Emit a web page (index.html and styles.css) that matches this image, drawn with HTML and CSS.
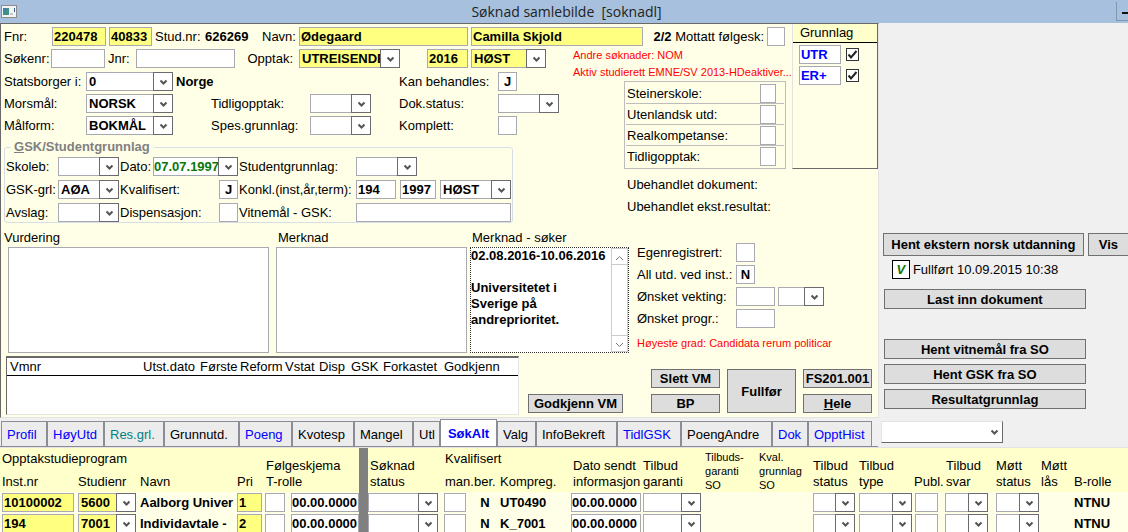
FILE: index.html
```html
<!DOCTYPE html>
<html lang="no">
<head>
<meta charset="utf-8">
<title>Søknad samlebilde</title>
<link rel="stylesheet" href="styles.css">
</head>
<body>
<div class="window">
  <header class="titlebar">
    <svg class="app-icon" width="16" height="13" viewBox="0 0 16 13" aria-hidden="true">
      <rect x=".5" y=".5" width="15" height="12" fill="#f4f4f4" stroke="#8d8d8d"/>
      <rect x="2" y="3" width="6" height="7" fill="#3f8f8a"/><rect x="2" y="3" width="3" height="3" fill="#4a79b8"/>
      <rect x="9" y="8" width="3" height="2" fill="#c3c9d6"/><rect x="13" y="3" width="1" height="4" fill="#3b5a86"/>
    </svg>
    <h1>Søknad samlebilde&nbsp; [soknadl]</h1>
    <button class="minimize" type="button" aria-label="Minimer"></button>
  </header>

  <div class="upper">
    <main class="form">
      <div class="top">
        <div class="top-main">
          <div class="row row-person">
            <label for="fnr">Fnr:</label>
            <input id="fnr" class="key" value="220478">
            <input class="key" value="40833" aria-label="Personnr">
            <span>Stud.nr:</span><b>626269</b>
            <label for="navn">Navn:</label>
            <input id="navn" class="key" value="Ødegaard">
            <input class="key" value="Camilla Skjold" aria-label="Fornavn">
            <label class="right" for="folgesk"><b>2/2</b> Mottatt følgesk:</label>
            <input id="folgesk">
          </div>
          <div class="middle">
            <div class="left">
              <div class="row row-opptak">
                <label for="sokenr">Søkenr:</label><input id="sokenr">
                <label for="jnr">Jnr:</label><input id="jnr">
                <label class="right" for="opptak">Opptak:</label>
                <span class="combo key"><select id="opptak"><option>UTREISENDE</option></select></span>
                <span></span>
                <input class="key" value="2016" aria-label="År">
                <span class="combo key"><select aria-label="Termin"><option>HØST</option></select></span>
              </div>
              <div class="details">
                <label for="stat">Statsborger i:</label>
                <span class="combo"><select id="stat"><option>0</option></select></span>
                <b class="country">Norge</b>
                <label class="c7" for="kan">Kan behandles:</label>
                <input id="kan" class="flag" value="J">

                <label for="morsmal">Morsmål:</label>
                <span class="combo"><select id="morsmal"><option>NORSK</option></select></span>
                <label class="c4" for="tidlig">Tidligopptak:</label>
                <span class="combo"><select id="tidlig"><option></option></select></span>
                <label class="c7" for="dok">Dok.status:</label>
                <span class="combo"><select id="dok"><option></option></select></span>

                <label for="malform">Målform:</label>
                <span class="combo"><select id="malform"><option>BOKMÅL</option></select></span>
                <label class="c4" for="spes">Spes.grunnlag:</label>
                <span class="combo"><select id="spes"><option></option></select></span>
                <label class="c7" for="komplett">Komplett:</label>
                <input id="komplett" class="flag">
              </div>
              <fieldset class="gsk">
                <legend><u>G</u>SK/Studentgrunnlag</legend>
                <div class="gsk-grid">
                  <label for="skoleb">Skoleb:</label>
                  <span class="combo"><select id="skoleb"><option></option></select></span>
                  <label for="dato">Dato:</label>
                  <span class="combo date"><select id="dato"><option>07.07.1997</option></select></span>
                  <label for="sgr">Studentgrunnlag:</label>
                  <span class="combo short"><select id="sgr"><option></option></select></span>

                  <label for="gskgrl">GSK-grl:</label>
                  <span class="combo"><select id="gskgrl"><option>AØA</option></select></span>
                  <span class="pair"><label for="kval">Kvalifisert:</label><input id="kval" class="flag" value="J"></span>
                  <label for="konkl">Konkl.(inst,år,term):</label>
                  <span class="trio">
                    <input id="konkl" value="194"><input value="1997" aria-label="Konklusjonsår">
                    <span class="combo"><select aria-label="Konklusjonstermin"><option>HØST</option></select></span>
                  </span>

                  <label for="avslag">Avslag:</label>
                  <span class="combo"><select id="avslag"><option></option></select></span>
                  <span class="pair"><label for="disp">Dispensasjon:</label><input id="disp" class="flag"></span>
                  <label for="vitne">Vitnemål - GSK:</label>
                  <input id="vitne">
                </div>
              </fieldset>
            </div>
            <div class="right-part">
              <p class="alert">Andre søknader: NOM</p>
              <p class="alert">Aktiv studierett EMNE/SV 2013-HDeaktiver...</p>
              <div class="types">
                <div><label for="steiner">Steinerskole:</label><input id="steiner"></div>
                <div><label for="utenl">Utenlandsk utd:</label><input id="utenl"></div>
                <div><label for="realk">Realkompetanse:</label><input id="realk"></div>
                <div><label for="tidl2">Tidligopptak:</label><input id="tidl2"></div>
              </div>
              <p class="pending">Ubehandlet dokument:</p>
              <p class="pending">Ubehandlet ekst.resultat:</p>
            </div>
          </div>
        </div>
        <section class="basis">
          <h2>Grunnlag</h2>
          <div><input value="UTR" aria-label="Grunnlag 1"><input type="checkbox" checked aria-label="UTR valgt"></div>
          <div><input value="ER+" aria-label="Grunnlag 2"><input type="checkbox" checked aria-label="ER+ valgt"></div>
        </section>
      </div>

      <div class="notes">
        <div class="note first"><label for="vurdering">Vurdering</label><textarea id="vurdering"></textarea></div>
        <div class="note"><label for="merknad">Merknad</label><textarea id="merknad"></textarea></div>
        <div class="note"><label for="merksok">Merknad - søker</label>
          <div class="focus-box">
            <textarea id="merksok">02.08.2016-10.06.2016

Universitetet i
Sverige på
andreprioritet.</textarea>
            <div class="scroll">
              <button type="button" aria-label="Rull opp"><svg width="9" height="6" viewBox="0 0 9 6"><path d="M1 5l3.500-3.500L8 5" /></svg></button>
              <button type="button" aria-label="Rull ned"><svg width="9" height="6" viewBox="0 0 9 6"><path d="M1 1l3.500 3.500L8 1" /></svg></button>
            </div>
          </div>
        </div>
        <div class="extra">
          <div class="extra-grid">
            <label for="egen">Egenregistrert:</label><input id="egen" class="flag">
            <label for="all">All utd. ved inst.:</label><input id="all" class="flag" value="N">
            <label for="vekt">Ønsket vekting:</label><input id="vekt">
            <span class="combo"><select aria-label="Vekting"><option></option></select></span>
            <label for="progr">Ønsket progr.:</label><input id="progr">
          </div>
          <p class="alert">Høyeste grad: Candidata rerum politicar</p>
        </div>
      </div>

      <div class="bottom">
        <div class="diplomas">
          <table>
            <thead><tr><th>Vmnr</th><th>Utst.dato</th><th>Første</th><th>Reform</th><th>Vstat</th><th>Disp</th><th>GSK</th><th>Forkastet</th><th>Godkjenn</th></tr></thead>
          </table>
        </div>
        <button class="btn approve" type="button">Godkjenn VM</button>
        <div class="actions">
          <button class="btn" type="button">Slett VM</button>
          <button class="btn tall" type="button">Fullfør</button>
          <button class="btn" type="button">FS201.001</button>
          <button class="btn" type="button">BP</button>
          <button class="btn" type="button"><u>H</u>ele</button>
        </div>
      </div>
    </main>

    <aside class="side">
      <div class="fetch"><button class="btn" type="button">Hent ekstern norsk utdanning</button><button class="btn" type="button">Vis</button></div>
      <p class="done"><span>V</span>Fullført 10.09.2015 10:38</p>
      <div class="stack">
        <button class="btn apart" type="button">Last inn dokument</button>
        <button class="btn" type="button">Hent vitnemål fra SO</button>
        <button class="btn" type="button">Hent GSK fra SO</button>
        <button class="btn" type="button">Resultatgrunnlag</button>
      </div>
    </aside>
  </div>

  <div class="tabbar">
    <nav class="tabs">
      <button type="button" class="w46 blue">Profil</button>
      <button type="button" class="w57 blue">HøyUtd</button>
      <button type="button" class="w60 teal">Res.grl.</button>
      <button type="button" class="w75">Grunnutd.</button>
      <button type="button" class="w53 blue">Poeng</button>
      <button type="button" class="w62">Kvotesp</button>
      <button type="button" class="w59">Mangel</button>
      <button type="button" class="w27">Utl</button>
      <button type="button" class="active">SøkAlt</button>
      <button type="button" class="w39">Valg</button>
      <button type="button" class="w81">InfoBekreft</button>
      <button type="button" class="w64 blue">TidlGSK</button>
      <button type="button" class="w91">PoengAndre</button>
      <button type="button" class="w36 blue">Dok</button>
      <button type="button" class="w64 blue">OpptHist</button>
    </nav>
    <span class="sunken"><select aria-label="Visning"><option></option></select></span>
  </div>

  <div class="grid-area">
    <table class="programs">
      <colgroup>
        <col class="k-inst"><col class="k-stud"><col class="k-navn"><col class="k-pri"><col class="k-trolle"><col class="k-skjema">
        <col class="k-split"><col class="k-status"><col class="k-man"><col class="k-ber"><col class="k-komp"><col class="k-sendt">
        <col class="k-gar"><col class="k-so"><col class="k-so"><col class="k-ts"><col class="k-type"><col class="k-publ"><col class="k-svar"><col class="k-ms"><col class="k-las"><col>
      </colgroup>
      <thead>
        <tr class="h1">
          <th colspan="4">Opptakstudieprogram</th>
          <th colspan="2" rowspan="2">Følgeskjema<br>T-rolle</th>
          <th rowspan="2" class="split"></th>
          <th rowspan="2">Søknad<br>status</th>
          <th colspan="3">Kvalifisert</th>
          <th rowspan="2">Dato sendt<br>informasjon</th>
          <th rowspan="2">Tilbud<br>garanti</th>
          <th rowspan="2" class="small">Tilbuds-<br>garanti<br>SO</th>
          <th rowspan="2" class="small">Kval.<br>grunnlag<br>SO</th>
          <th rowspan="2">Tilbud<br>status</th>
          <th rowspan="2">Tilbud<br>type</th>
          <th rowspan="2" class="flush">Publ.</th>
          <th rowspan="2">Tilbud<br>svar</th>
          <th rowspan="2">Møtt<br>status</th>
          <th rowspan="2" class="flush">Møtt<br>lås</th>
          <th rowspan="2">B-rolle</th>
        </tr>
        <tr class="h2"><th>Inst.nr</th><th>Studienr</th><th>Navn</th><th>Pri</th><th>man.</th><th>ber.</th><th>Kompreg.</th></tr>
      </thead>
      <tbody>
        <tr>
          <td><input class="key" value="10100002" aria-label="Inst.nr"></td>
          <td><span class="combo key"><select aria-label="Studienr"><option>5600</option></select></span></td>
          <td>Aalborg Univer</td>
          <td><input class="key" value="1" aria-label="Pri"></td>
          <td class="roomy"><input aria-label="T-rolle"></td>
          <td class="full"><input value="00.00.0000" aria-label="Følgeskjema"></td>
          <td class="split"></td>
          <td class="status"><span class="combo"><select aria-label="Søknad status"><option></option></select></span></td>
          <td class="roomy"><input aria-label="Kvalifisert man."></td>
          <td class="mid">N</td><td>UT0490</td>
          <td class="full"><input value="00.00.0000" aria-label="Dato sendt"></td>
          <td><span class="combo"><select aria-label="Tilbud garanti"><option></option></select></span></td>
          <td></td><td></td>
          <td><span class="combo"><select aria-label="Tilbud status"><option></option></select></span></td>
          <td><span class="combo"><select aria-label="Tilbud type"><option></option></select></span></td>
          <td class="roomy"><input aria-label="Publ."></td>
          <td class="roomy"><span class="combo"><select aria-label="Tilbud svar"><option></option></select></span></td>
          <td><span class="combo"><select aria-label="Møtt status"><option></option></select></span></td>
          <td></td><td>NTNU</td>
        </tr>
        <tr>
          <td><input class="key" value="194" aria-label="Inst.nr"></td>
          <td><span class="combo key"><select aria-label="Studienr"><option>7001</option></select></span></td>
          <td>Individavtale -</td>
          <td><input class="key" value="2" aria-label="Pri"></td>
          <td class="roomy"><input aria-label="T-rolle"></td>
          <td class="full"><input value="00.00.0000" aria-label="Følgeskjema"></td>
          <td class="split"></td>
          <td class="status"><span class="combo"><select aria-label="Søknad status"><option></option></select></span></td>
          <td class="roomy"><input aria-label="Kvalifisert man."></td>
          <td class="mid">N</td><td>K_7001</td>
          <td class="full"><input value="00.00.0000" aria-label="Dato sendt"></td>
          <td><span class="combo"><select aria-label="Tilbud garanti"><option></option></select></span></td>
          <td></td><td></td>
          <td><span class="combo"><select aria-label="Tilbud status"><option></option></select></span></td>
          <td><span class="combo"><select aria-label="Tilbud type"><option></option></select></span></td>
          <td class="roomy"><input aria-label="Publ."></td>
          <td class="roomy"><span class="combo"><select aria-label="Tilbud svar"><option></option></select></span></td>
          <td><span class="combo"><select aria-label="Møtt status"><option></option></select></span></td>
          <td></td><td>NTNU</td>
        </tr>
      </tbody>
    </table>
  </div>
</div>
</body>
</html>
```
FILE: styles.css
```css
*, *::before, *::after { box-sizing: border-box; margin: 0; padding: 0; }

body {
  font: 13px/19px "Liberation Sans", Arial, sans-serif;
  color: #000;
  background: #f0f0f0;
}

.window { height: 100vh; overflow: hidden; display: flex; flex-direction: column; }

label, p, span, b { white-space: nowrap; }

/* Title bar */
.titlebar {
  flex: none;
  display: grid;
  grid-template-columns: 16px 1fr 12px;
  align-items: center;
  height: 23px;
  padding: 0 0 0 1px;
  background: #a6c0dd;
}
.titlebar h1 {
  font: 400 14px/22px "Open Sans", "Noto Sans", sans-serif;
  color: #222;
  text-align: center;
}
.minimize { height: 19px; border: 0; background: linear-gradient(#111, #111) 5px 10px / 8px 2px no-repeat #a6c0dd; border-left: 1px solid #8296ad; border-bottom: 1px solid #8296ad; }

/* Fields */
input, select, textarea {
  font: 700 13px/17px "Liberation Sans", Arial, sans-serif;
  color: #000;
  background: #fff;
  border: 1px solid #a9a9b1;
  border-radius: 0;
  outline: 0;
  min-width: 0;
}
input { height: 19px; width: 100%; padding: 0 0 0 1px; }
.flag { width: 19px; text-align: center; padding: 0; }
.combo { position: relative; display: block; height: 19px; min-width: 0; }
.combo select { appearance: none; display: block; width: 100%; height: 19px; padding: 0 18px 0 2px; }
.combo::after {
  content: "";
  position: absolute;
  top: 0;
  right: 0;
  width: 20px;
  height: 19px;
  border: 1px solid #6a6a70;
  background: #fff url("data:image/svg+xml,%3Csvg xmlns='http://www.w3.org/2000/svg' width='9' height='7'%3E%3Cpath d='M1.500 1.500l3 3 3-3' fill='none' stroke='%23555' stroke-width='2'/%3E%3C/svg%3E") 5px 6px no-repeat;
  pointer-events: none;
}
.key, .key select { background: #ffff80; }
.date select { color: #087808; padding-left: 0; }

.btn {
  font: 700 13px/15px "Liberation Sans", Arial, sans-serif;
  color: #000;
  background: #ddd;
  border: 1px solid #707070;
  white-space: nowrap;
}

/* Form panel */
.upper { flex: none; display: flex; }
.form {
  flex: 0 0 878px;
  background: #ffffe8;
  border-top: 1px solid #696969;
  border-left: 1px solid #696969;
  border-right: 1px solid #e3e3e3;
  border-bottom: 1px solid #e3e3e3;
}
.top { display: flex; align-items: flex-start; justify-content: space-between; }
.top-main { padding: 3px 0 0 3px; }
.row { display: grid; column-gap: 3px; }
.row-person { grid-template-columns: 45px 54px 43px 47px 54px 34px 169px 172px 118px 18px; margin-bottom: 1px; }
.row-opptak { grid-template-columns: 44px 54px 25px 99px 58px 101px 21px 41px 75px; margin-bottom: 4px; }
.row-opptak .right { padding-right: 3px; }
.right { text-align: right; }
.middle { display: flex; }
.left { width: 569px; padding-top: 2px; }
.details { display: grid; grid-template-columns: 79px 87px 32px 96px 61px 22px 96px 61px; gap: 3px; }
.country { grid-column: 3 / 6; }
.c4 { grid-column: 4; }
.c7 { grid-column: 7; }

.gsk { width: 509px; margin-top: 4px; padding: 2px 0 0 1px; border: 1px solid #d5dfe5; border-radius: 3px; }
.gsk legend { margin-left: 5px; padding: 0 4px 0 3px; font-weight: 700; line-height: 16px; color: #808080; }
.gsk-grid { display: grid; grid-template-columns: 51px 61px 32px 85px 116px 155px; column-gap: 1px; row-gap: 4px; }
.short { width: 61px; }
.pair { grid-column: 3 / 5; display: flex; justify-content: space-between; }
.trio { display: grid; grid-template-columns: 40px 36px 71px; column-gap: 4px; }

.alert { font-size: 11px; line-height: 17px; color: #f00; }
.types { width: 162px; margin: 0 0 5px 51px; border: 1px solid #bdbdbd; padding: 1px; }
.types div { display: flex; justify-content: space-between; height: 21px; padding: 1px 8px 0 1px; border-bottom: 1px solid #bdbdbd; }
.types div:last-child { border-bottom: 0; }
.types input { width: 16px; }
.pending { margin-left: 54px; line-height: 22px; }

.basis {
  width: 86px;
  height: 145px;
  border-left: 1px solid #e3e3e3;
  border-right: 1px solid #696969;
  border-bottom: 1px solid #696969;
}
.basis h2 { height: 19px; margin-bottom: 2px; padding-left: 7px; font-size: 13px; font-weight: 400; line-height: 18px; background: #ffffcc; border-bottom: 1px solid #000; }
.basis div { display: flex; align-items: center; gap: 5px; padding: 0 6px; margin-bottom: 2px; }
.basis input { width: 42px; color: #00f; }
.basis input[type="checkbox"] {
  appearance: none;
  width: 13px;
  height: 13px;
  padding: 0;
  border: 1px solid #333;
  background: #fff url("data:image/svg+xml,%3Csvg xmlns='http://www.w3.org/2000/svg' width='11' height='11'%3E%3Cpath d='M1.500 5.500l2.500 3L9.500 2' fill='none' stroke='%23222' stroke-width='2'/%3E%3C/svg%3E") center no-repeat;
}

/* Notes */
.notes { display: grid; grid-template-columns: 269px 191px 159px 1fr; column-gap: 3px; padding-left: 3px; }
.note { padding-top: 5px; }
.note label { display: block; padding-left: 2px; }
.first label { padding-left: 0; }
.note textarea { display: block; width: 100%; height: 106px; resize: none; }
.first textarea { width: 261px; margin-left: 4px; }
.focus-box { display: flex; height: 106px; border: 1px dotted #333; background: #fff; }
.focus-box textarea { flex: 1; height: 104px; border: 0; line-height: 16px; overflow: hidden; white-space: pre; }
.scroll { display: flex; flex-direction: column; justify-content: space-between; width: 17px; border: 1px solid #ccc; }
.scroll button { height: 16px; border: 0; border-bottom: 1px solid #ccc; background: #fff; line-height: 10px; }
.scroll button:last-child { border-bottom: 0; border-top: 1px solid #ccc; }
.scroll path { fill: none; stroke: #777; stroke-width: 1; }
.extra { padding: 20px 0 0 5px; }
.extra-grid { display: grid; grid-template-columns: 96px 39px 46px; gap: 3px; margin-bottom: 7px; }
.extra-grid label { grid-column: 1; }

/* Diplomas and actions */
.bottom { display: flex; height: 64px; padding: 3px 5px 2px; }
.diplomas { width: 513px; height: 59px; background: #fff; border: 1px solid #e3e3e3; border-top: 2px solid #696969; border-left: 1px solid #696969; }
.diplomas table { width: 100%; table-layout: fixed; border-collapse: collapse; border-bottom: 1px solid #000; }
.diplomas th { font-weight: 400; line-height: 17px; text-align: left; white-space: nowrap; width: 57px; padding: 0; }
.diplomas th:nth-child(1) { width: 136px; padding-left: 3px; }
.diplomas th:nth-child(3) { width: 40px; }
.diplomas th:nth-child(4) { width: 45px; }
.diplomas th:nth-child(5) { width: 34px; }
.diplomas th:nth-child(6) { width: 32px; }
.diplomas th:nth-child(7) { width: 32px; }
.diplomas th:nth-child(8) { width: 61px; }
.diplomas th:nth-child(9) { width: auto; }
.approve { align-self: flex-end; width: 95px; height: 19px; margin: 0 28px 2px 9px; }
.actions { display: grid; grid-template-columns: repeat(3, 69px); grid-template-rows: 19px 19px; column-gap: 7px; row-gap: 6px; align-content: end; padding-bottom: 2px; }
.tall { grid-row: 1 / 3; grid-column: 2; }

/* Side buttons */
.side { flex: 1; padding: 210px 0 0 4px; min-width: 0; }
.fetch { display: flex; gap: 4px; }
.fetch .btn { flex: 0 0 201px; height: 23px; }
.fetch .btn:last-child { flex: 0 0 41px; }
.done { display: flex; gap: 3px; margin: 4px 0 10px 9px; }
.done span { width: 18px; line-height: 17px; border: 1px solid #000; background: #fff; font-weight: 700; font-style: italic; color: #087808; text-align: center; }
.stack { display: flex; flex-direction: column; gap: 5px; width: 202px; margin-left: 1px; }
.stack .btn { height: 20px; }
.stack .apart { margin-bottom: 25px; }

/* Tabs */
.tabbar { flex: none; display: flex; gap: 3px; height: 29px; align-items: flex-end; }
.tabs { flex: 0 0 878px; display: flex; align-items: flex-end; padding: 0 0 0 1px; border-bottom: 1px solid #8a8c96; }
.tabs button {
  height: 25px;
  border: 1px solid #8a8c96;
  border-bottom: 0;
  background: #ececec;
  font: 13px/23px "Liberation Sans", Arial, sans-serif;
  color: #000;
  padding: 0 0 0 5px;
  text-align: left;
  white-space: nowrap;
}
.tabs .active { width: 57px; height: 27px; background: #fff; color: #00f; font-weight: 700; text-align: center; padding: 0; }
.tabs .blue { color: #00f; }
.tabs .teal { color: #008080; }
.w27 { width: 27px; } .w36 { width: 36px; } .w39 { width: 39px; } .w46 { width: 46px; } .w53 { width: 53px; }
.w57 { width: 57px; } .w59 { width: 59px; } .w60 { width: 60px; } .w62 { width: 62px; } .w64 { width: 64px; }
.w75 { width: 75px; } .w81 { width: 81px; } .w91 { width: 91px; }
.sunken { align-self: flex-start; width: 122px; height: 22px; margin-top: 3px; border: 1px solid #e3e3e3; border-right: 1px solid #696969; border-bottom: 1px solid #696969; }
.sunken select {
  display: block;
  appearance: none;
  width: 100%;
  height: 20px;
  border: 0;
  background: #fff url("data:image/svg+xml,%3Csvg xmlns='http://www.w3.org/2000/svg' width='9' height='7'%3E%3Cpath d='M1.500 1.500l3 3 3-3' fill='none' stroke='%23555' stroke-width='2'/%3E%3C/svg%3E") right 3px center no-repeat;
}

/* Study programmes */
.grid-area { flex: 1; min-height: 0; overflow: hidden; background: #ffffe8; border-top: 1px solid #e3e3e3; }
.programs { width: 100%; table-layout: fixed; border-collapse: collapse; }
.programs th { font-weight: 400; line-height: 16px; text-align: left; vertical-align: bottom; background: #ffffcc; white-space: nowrap; padding: 0 0 2px 2px; }
.programs .h1 th { height: 21px; }
.programs .h1 th[colspan="4"], .programs .h1 th[colspan="3"] { vertical-align: top; padding-top: 3px; padding-bottom: 0; }
.programs .h2 th { height: 23px; }
.programs .small { font-size: 11px; line-height: 14px; padding-bottom: 0; }
.programs .flush { padding-left: 0; }
.programs td { height: 21px; padding: 1px 2px; font-weight: 700; white-space: nowrap; }
.programs td.roomy { padding-right: 6px; padding-left: 1px; }
.programs td.full { padding: 1px 0; }
.programs td.full input { padding: 0; }
.programs td.status { padding: 1px 5px 1px 0; }
.programs .split { background: #808080; padding: 0; }
.programs .mid { text-align: center; padding: 0; }
.k-inst { width: 76px; } .k-stud { width: 62px; } .k-navn { width: 97px; } .k-pri { width: 29px; }
.k-trolle { width: 27px; } .k-skjema { width: 68px; } .k-split { width: 9px; } .k-status { width: 75px; }
.k-man { width: 29px; } .k-ber { width: 26px; } .k-komp { width: 73px; } .k-sendt { width: 70px; }
.k-gar { width: 62px; } .k-so { width: 54px; } .k-ts { width: 46px; } .k-type { width: 57px; }
.k-publ { width: 30px; } .k-svar { width: 50px; } .k-ms { width: 47px; } .k-las { width: 31px; }
```
